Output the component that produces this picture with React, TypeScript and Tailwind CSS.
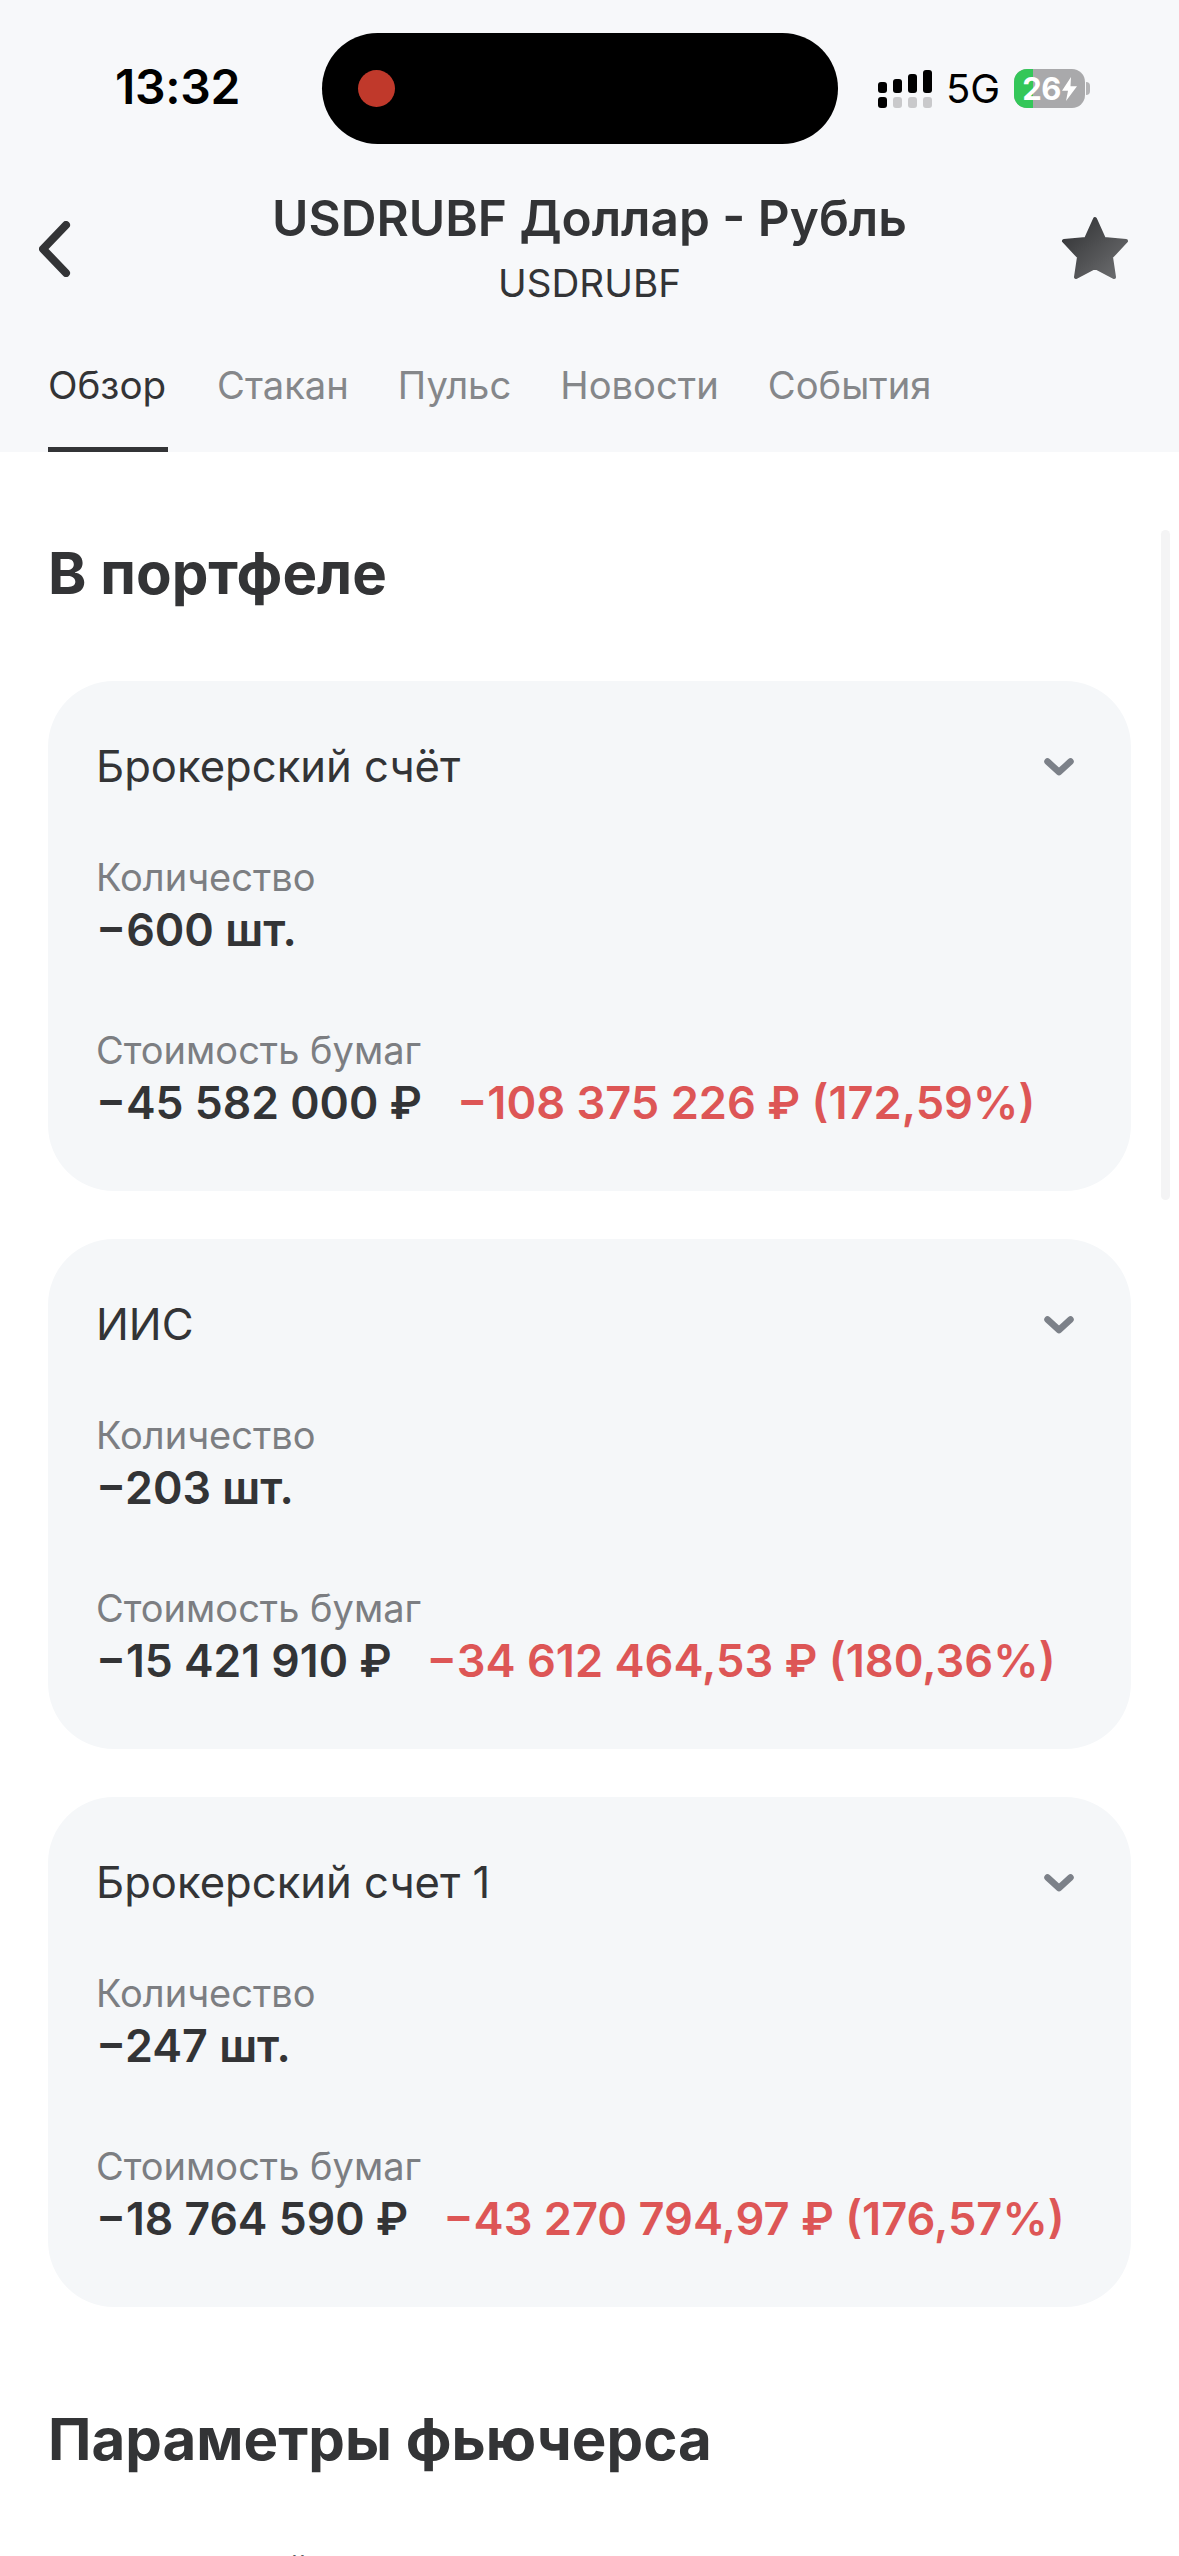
const font = "font-['Inter','Noto_Sans',sans-serif]";

function Signal() {
  return (
    <svg width="56" height="40" viewBox="0 0 56 40" className="block">
      <rect x="0" y="13" width="9" height="11" rx="3" fill="#000" />
      <rect x="15" y="10" width="9" height="14" rx="3" fill="#000" />
      <rect x="30" y="5" width="9" height="19" rx="3" fill="#000" />
      <rect x="45" y="1" width="9" height="23" rx="3" fill="#000" />
      <rect x="0" y="28" width="9" height="11" rx="3" fill="#000" />
      <rect x="15" y="28" width="9" height="11" rx="3" fill="#c9c9cb" />
      <rect x="30" y="28" width="9" height="11" rx="3" fill="#c9c9cb" />
      <rect x="45" y="28" width="9" height="11" rx="3" fill="#c9c9cb" />
    </svg>
  );
}

function Battery() {
  return (
    <div className="flex items-center">
      <div className="relative flex h-[39px] w-[71px] items-center justify-center overflow-hidden rounded-[13px] bg-[#a9a9ab]">
        <div className="absolute inset-y-0 left-0 w-[19px] bg-[#34c759]" />
        <span className="relative text-[31px] leading-none font-bold tracking-[-0.5px] text-white">26</span>
        <svg width="15" height="24" viewBox="0 0 15 26" className="relative ml-[1px]" preserveAspectRatio="none">
          <path d="M9 0 L0 15 H6 L4 26 L15 10 H8.5 Z" fill="#fff" />
        </svg>
      </div>
      <div className="ml-[1px] h-[13px] w-[4px] rounded-r-full bg-[#b4b4b6]" />
    </div>
  );
}

function StatusBar() {
  return (
    <div className="flex h-[111px] items-center pl-[115px]">
      <span className="mt-[-4px] w-[207px] text-[48px] leading-none font-semibold tracking-[-0.3px] text-black">13:32</span>
      <div className="flex h-[111px] w-[516px] items-center rounded-[56px] bg-black pl-[36px]">
        <div className="h-[37px] w-[37px] rounded-full bg-[#c0392b]" />
      </div>
      <div className="ml-[40px] flex items-center">
        <Signal />
        <span className="ml-[12px] text-[40px] leading-none text-black">5G</span>
        <div className="ml-[14px]">
          <Battery />
        </div>
      </div>
    </div>
  );
}

function Header() {
  return (
    <div className="flex items-start pt-[46px]">
      <div className="flex w-[210px] shrink-0 items-center pl-[39px] pt-[31px]">
        <svg width="34" height="56" viewBox="0 0 34 56" fill="none">
          <path d="M27 4 L4 28 L27 52" stroke="#333436" strokeWidth="8" strokeLinecap="round" strokeLinejoin="round" />
        </svg>
      </div>
      <div className="flex min-w-0 flex-1 flex-col items-center">
        <div className="text-[49.5px] leading-[56px] font-semibold whitespace-nowrap text-[#333436]">USDRUBF Доллар - Рубль</div>
        <div className="mt-[15px] text-[38.6px] leading-[44px] text-[#333436]">USDRUBF</div>
      </div>
      <div className="flex w-[210px] shrink-0 justify-end pr-[49px] pt-[25px]">
        <svg width="70" height="66" viewBox="-2 -2 70 66">
          <defs>
            <linearGradient id="star" x1="0" y1="0" x2="1" y2="1">
              <stop offset="0" stopColor="#2f3032" />
              <stop offset="1" stopColor="#6f7072" />
            </linearGradient>
          </defs>
          <path
            d="M33 2 L42 22 L64 24 L49 40 L52 60 L33 50 L14 60 L17 40 L2 24 L24 22 Z"
            fill="url(#star)"
            stroke="url(#star)"
            strokeWidth="4"
            strokeLinejoin="round"
          />
        </svg>
      </div>
    </div>
  );
}

function Tabs() {
  const tabs = ["Обзор", "Стакан", "Пульс", "Новости", "События"];
  return (
    <div className="mt-[42px] flex gap-[49px] pl-[48px]">
      {tabs.map((t, i) => (
        <div
          key={t}
          className={
            i === 0
              ? "h-[105px] w-[120px] border-b-[5px] border-[#333436] pt-[16px] text-[38.6px] leading-[44px] whitespace-nowrap text-[#333436]"
              : "h-[105px] pt-[16px] text-[38.2px] leading-[44px] text-[#85878a]"
          }
        >
          {t}
        </div>
      ))}
    </div>
  );
}

function Card({ title, qty, cost, pnl }: { title: string; qty: string; cost: string; pnl: string }) {
  return (
    <div className="h-[510px] rounded-[66px] bg-[#f5f7f9] px-[48px] pt-[62px]">
      <div className="flex items-center justify-between">
        <span className="text-[43.6px] leading-[48px] text-[#333436]">{title}</span>
        <svg width="30" height="18" viewBox="0 0 30 18" fill="none" className="mr-[9px]">
          <path d="M3.5 3.5 L15 14 L26.5 3.5" stroke="#7c8189" strokeWidth="6.5" strokeLinecap="round" strokeLinejoin="round" />
        </svg>
      </div>
      <div className="mt-[64px] text-[38px] leading-[44px] text-[#7c7e82]">Количество</div>
      <div className="mt-[6px] text-[44.8px] leading-[50px] font-semibold text-[#333436]">{qty}</div>
      <div className="mt-[73px] text-[38px] leading-[44px] text-[#7c7e82]">Стоимость бумаг</div>
      <div className="mt-[6px] flex gap-[35px] leading-[50px] font-semibold whitespace-nowrap">
        <span className="text-[44.5px] text-[#333436]">{cost}</span>
        <span className="text-[45.2px] text-[#dd5656]">{pnl}</span>
      </div>
    </div>
  );
}

export default function App() {
  return (
    <div className={`relative h-[2556px] w-[1179px] overflow-hidden bg-white ${font}`}>
      <div className="h-[452px] bg-[#f7f8fa] pt-[33px]">
        <StatusBar />
        <Header />
        <Tabs />
      </div>
      <div className="px-[48px]">
        <h2 className="mt-[90px] text-[58.2px] leading-[62px] font-bold text-[#333436]">В портфеле</h2>
        <div className="mt-[77px] flex flex-col gap-[48px]">
          <Card title="Брокерский счёт" qty="−600 шт." cost="−45 582 000 ₽" pnl="−108 375 226 ₽ (172,59%)" />
          <Card title="ИИС" qty="−203 шт." cost="−15 421 910 ₽" pnl="−34 612 464,53 ₽ (180,36%)" />
          <Card title="Брокерский счет 1" qty="−247 шт." cost="−18 764 590 ₽" pnl="−43 270 794,97 ₽ (176,57%)" />
        </div>
        <h2 className="mt-[98px] text-[58.2px] leading-[68px] font-bold whitespace-nowrap text-[#333436]">Параметры фьючерса</h2>
        <div className="mt-[75px] text-[37px] leading-[44px] whitespace-nowrap text-[#333436]">Минимальный шаг цены</div>
      </div>
      <div className="absolute top-[530px] right-[9px] h-[670px] w-[9px] rounded-full bg-[#f4f4f5]" />
    </div>
  );
}
